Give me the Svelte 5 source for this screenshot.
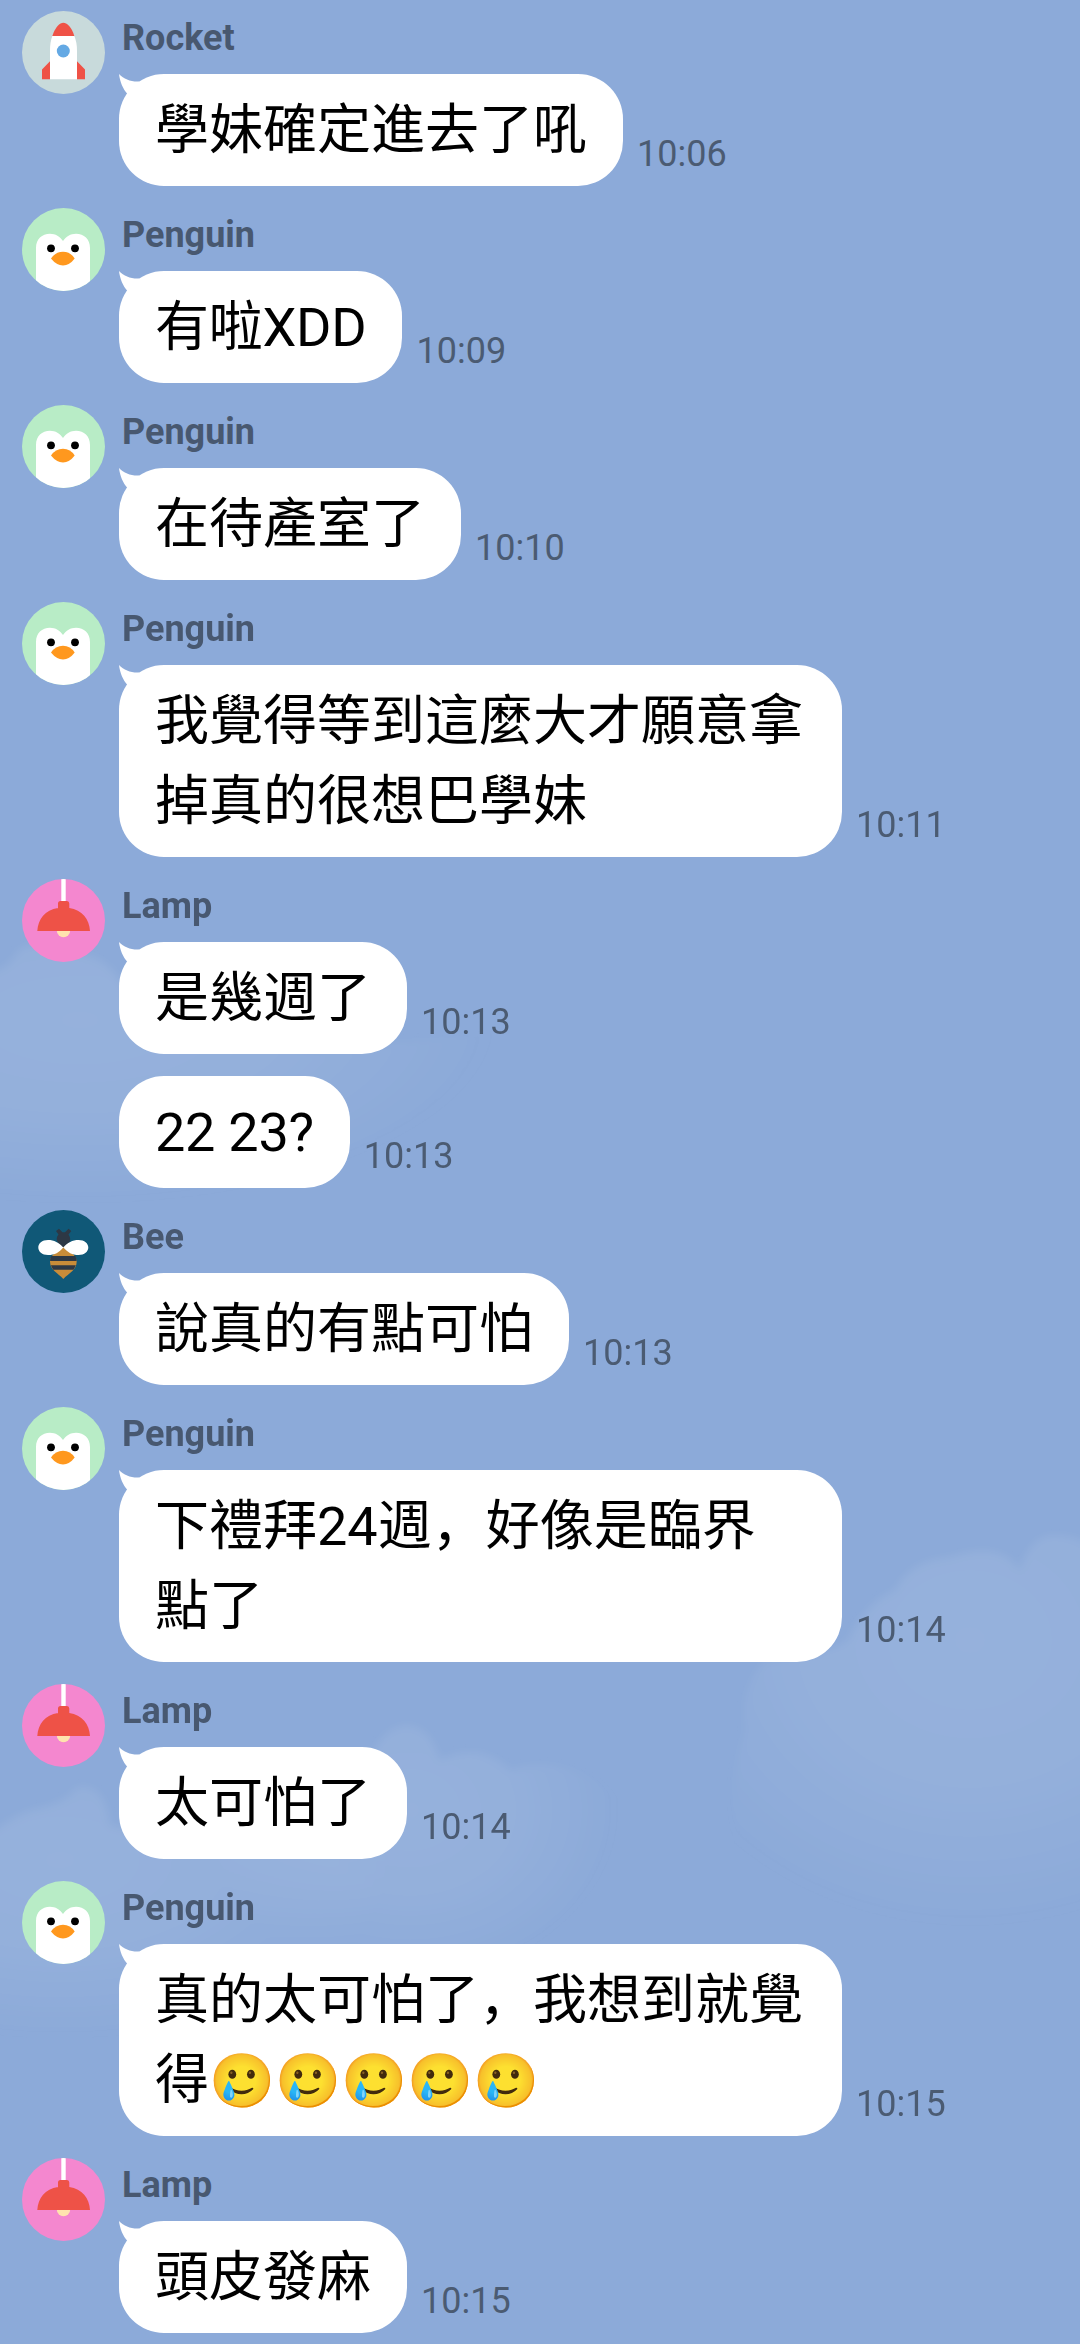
<script>
  const groups = [
    { sender: 'Rocket', messages: [{ text: '學妹確定進去了吼', time: '10:06' }] },
    { sender: 'Penguin', messages: [{ text: '有啦XDD', time: '10:09' }] },
    { sender: 'Penguin', messages: [{ text: '在待產室了', time: '10:10' }] },
    { sender: 'Penguin', messages: [{ text: '我覺得等到這麼大才願意拿掉真的很想巴學妹', time: '10:11' }] },
    {
      sender: 'Lamp',
      messages: [
        { text: '是幾週了', time: '10:13' },
        { text: '22 23?', time: '10:13' },
      ],
    },
    { sender: 'Bee', messages: [{ text: '說真的有點可怕', time: '10:13' }] },
    { sender: 'Penguin', messages: [{ text: '下禮拜24週，好像是臨界點了', time: '10:14' }] },
    { sender: 'Lamp', messages: [{ text: '太可怕了', time: '10:14' }] },
    { sender: 'Penguin', messages: [{ text: '真的太可怕了，我想到就覺得', emoji: '🥲🥲🥲🥲🥲', time: '10:15' }] },
    { sender: 'Lamp', messages: [{ text: '頭皮發麻', time: '10:15' }] },
  ];

  const hasLatin = (text) => /[A-Za-z?]/.test(text);
</script>

{#snippet avatar(sender)}
  <svg class="avatar" viewBox="0 0 83 83" aria-hidden="true">
    {#if sender === 'Rocket'}
      <rect width="83" height="83" fill="#c8dadb" />
      <path d="M28 50.3L20 58.5V68.3H28ZM55 50.3L63 58.5V68.3H55Z" fill="#ef5246" />
      <path d="M30.3 25H52.3Q55 31 55 40V68.3H28V40Q28 31 30.3 25Z" fill="#fff" />
      <path d="M30.3 25C33 16 38 11.7 41.3 11.7S50 16 52.3 25Z" fill="#ef5246" />
      <circle cx="41.3" cy="40" r="6.5" fill="#64a9e4" />
    {:else if sender === 'Penguin'}
      <rect width="83" height="83" fill="#b8ecc6" />
      <path d="M14 83V40C14 31 20 25.7 28 25.7C33.5 25.7 38 28.5 41 33C44 28.5 48.5 25.7 54 25.7C62 25.7 68 31 68 40V83Z" fill="#fff" />
      <circle cx="29" cy="40.3" r="3.9" />
      <circle cx="53" cy="40.3" r="3.9" />
      <path d="M29 50.5Q33.5 43.7 41 43.7T52.7 50.5Q47.5 57.4 41 57.4T29 50.5Z" fill="#ff981e" />
    {:else if sender === 'Lamp'}
      <rect width="83" height="83" fill="#f487cf" />
      <rect x="39.3" width="4.4" height="23" fill="#fff" />
      <circle cx="41.5" cy="51.5" r="6.7" fill="#ffe3ae" />
      <path d="M36 30V24.5Q36 22 38.5 22H45Q47.3 22 47.3 24.5V29C60 31 67.5 40 68 52H15.3C16 40 23 31 36 29Z" fill="#ee5247" />
    {:else}
      <rect width="83" height="83" fill="#105877" />
      <path d="M34 21L37 18.7L40.5 22.2H43L46.5 18.7L49.3 21L46.5 24.5Q49.3 29 47.5 32L41.3 38L35.5 32Q33.5 28 36.5 24.5Z" fill="#2d3845" />
      <path d="M41.3 36.7C45 42 54.7 43 54.7 51.5C54.7 60 47 63 41.3 69C36 63 28 60 28 51.5C28 43 38 42 41.3 36.7Z" fill="#c88c39" />
      <path d="M29.3 46H53.4Q54.7 48.5 54.6 51H28.1Q28 48.5 29.3 46ZM28.9 55.3H53.8Q53 57.5 51.5 59.7H31.3Q29.5 57.5 28.9 55.3Z" fill="#2d3845" />
      <path d="M41.3 37.5C37 32.5 32 30 26 30C20 30 16.3 33.5 16.3 37.5S20 45 26 45C33 45 37 42.5 41.3 37.5C46 42.5 50 45 56.5 45C62.5 45 66.3 41.5 66.3 37.5S62.5 30 56.5 30C50.5 30 45.5 32.5 41.3 37.5Z" fill="#fff" />
    {/if}
  </svg>
{/snippet}

<main class="chat">
  <svg class="sky" viewBox="0 0 1080 2344" aria-hidden="true">
    <defs>
      <filter id="soft" x="-20%" y="-20%" width="140%" height="140%">
        <feGaussianBlur stdDeviation="4" />
      </filter>
      <radialGradient id="haze">
        <stop offset="0" stop-color="#fff" stop-opacity="0.09" />
        <stop offset="0.5" stop-color="#fff" stop-opacity="0.07" />
        <stop offset="1" stop-color="#fff" stop-opacity="0" />
      </radialGradient>
      <clipPath id="left-cloud">
        <path d="M-20 975Q10 970 18 950Q50 935 85 955Q115 960 130 1000Q200 1030 310 1050L620 1020V1240H-20Z" />
      </clipPath>
      <clipPath id="right-cloud">
        <path d="M735 1850Q725 1780 745 1730Q738 1690 765 1660Q850 1650 850 1635Q870 1600 895 1590Q910 1560 950 1557Q1000 1540 1020 1570Q1030 1535 1055 1535Q1085 1535 1110 1560V1980H700Z" />
      </clipPath>
      <clipPath id="low-cloud">
        <path d="M-20 1840Q20 1810 40 1808Q70 1800 75 1788Q105 1780 110 1825Q250 1850 360 1800Q370 1730 405 1725Q430 1725 440 1760Q480 1740 510 1770Q570 1750 620 1800V2050H-20Z" />
      </clipPath>
    </defs>
    <g fill="url(#haze)" filter="url(#soft)">
      <ellipse cx="80" cy="1020" rx="420" ry="185" clip-path="url(#left-cloud)" />
      <ellipse cx="970" cy="1640" rx="340" ry="290" clip-path="url(#right-cloud)" />
      <ellipse cx="60" cy="1860" rx="330" ry="180" clip-path="url(#low-cloud)" />
      <ellipse cx="410" cy="1810" rx="210" ry="170" clip-path="url(#low-cloud)" />
    </g>
  </svg>

  {#each groups as group}
    <section class="group">
      {@render avatar(group.sender)}
      <div class="content">
        <h2 class="name">{group.sender}</h2>
        {#each group.messages as message, i}
          <div class="row">
            <div class="bubble">
              {#if i === 0}
                <svg class="tail" viewBox="0 0 24 24" aria-hidden="true">
                  <path d="M0 0C5 5 12 8 20 7.5L22 16L8.5 20C4 15 1 8 0 0Z" />
                </svg>
              {/if}
              <p class:latin={hasLatin(message.text)}>{message.text}{#if message.emoji}<span class="emoji">{message.emoji}</span>{/if}</p>
            </div>
            <time>{message.time}</time>
          </div>
        {/each}
      </div>
    </section>
  {/each}
</main>

<style>
  :global(body) {
    margin: 0;
    background: #8caad9;
  }

  .chat {
    position: relative;
    box-sizing: border-box;
    width: 1080px;
    height: 2344px;
    overflow: hidden;
    display: flex;
    flex-direction: column;
    gap: 22px;
    padding: 11px 22px;
    background: #8caad9;
    font-family: Roboto, 'Noto Sans CJK SC', sans-serif;
  }

  .sky {
    position: absolute;
    inset: 0;
    width: 1080px;
    height: 2344px;
  }

  .group {
    position: relative;
    flex: none;
    display: flex;
    align-items: flex-start;
    gap: 14px;
  }

  .avatar {
    flex: none;
    width: 83px;
    height: 83px;
    border-radius: 50%;
  }

  .content {
    display: flex;
    flex-direction: column;
  }

  .name {
    height: 63px;
    margin: 0;
    padding-left: 3px;
    box-sizing: border-box;
    color: #485870;
    font-size: 36px;
    font-weight: 700;
    line-height: 54px;
  }

  .row {
    display: flex;
    align-items: flex-end;
    gap: 14px;
  }

  .row + .row {
    margin-top: 22px;
  }

  .bubble {
    position: relative;
    box-sizing: border-box;
    max-width: 723px;
    padding: 17px 36px 15px;
    border-radius: 45px;
    background: #fff;
  }

  /* sits on the rounded corner and leaves a notch on either side */
  .tail {
    position: absolute;
    top: 0;
    left: 0;
    width: 24px;
    height: 24px;
    fill: #fff;
  }

  p {
    margin: 0;
    color: #000;
    font-size: 54px;
    line-height: 80px;
    word-break: break-all;
  }

  .latin {
    letter-spacing: -0.25px;
  }

  .emoji {
    font-size: 53px;
    line-height: 1;
  }

  time {
    padding-bottom: 11px;
    color: #4b5b72;
    font-size: 36px;
    line-height: 42px;
  }
</style>
